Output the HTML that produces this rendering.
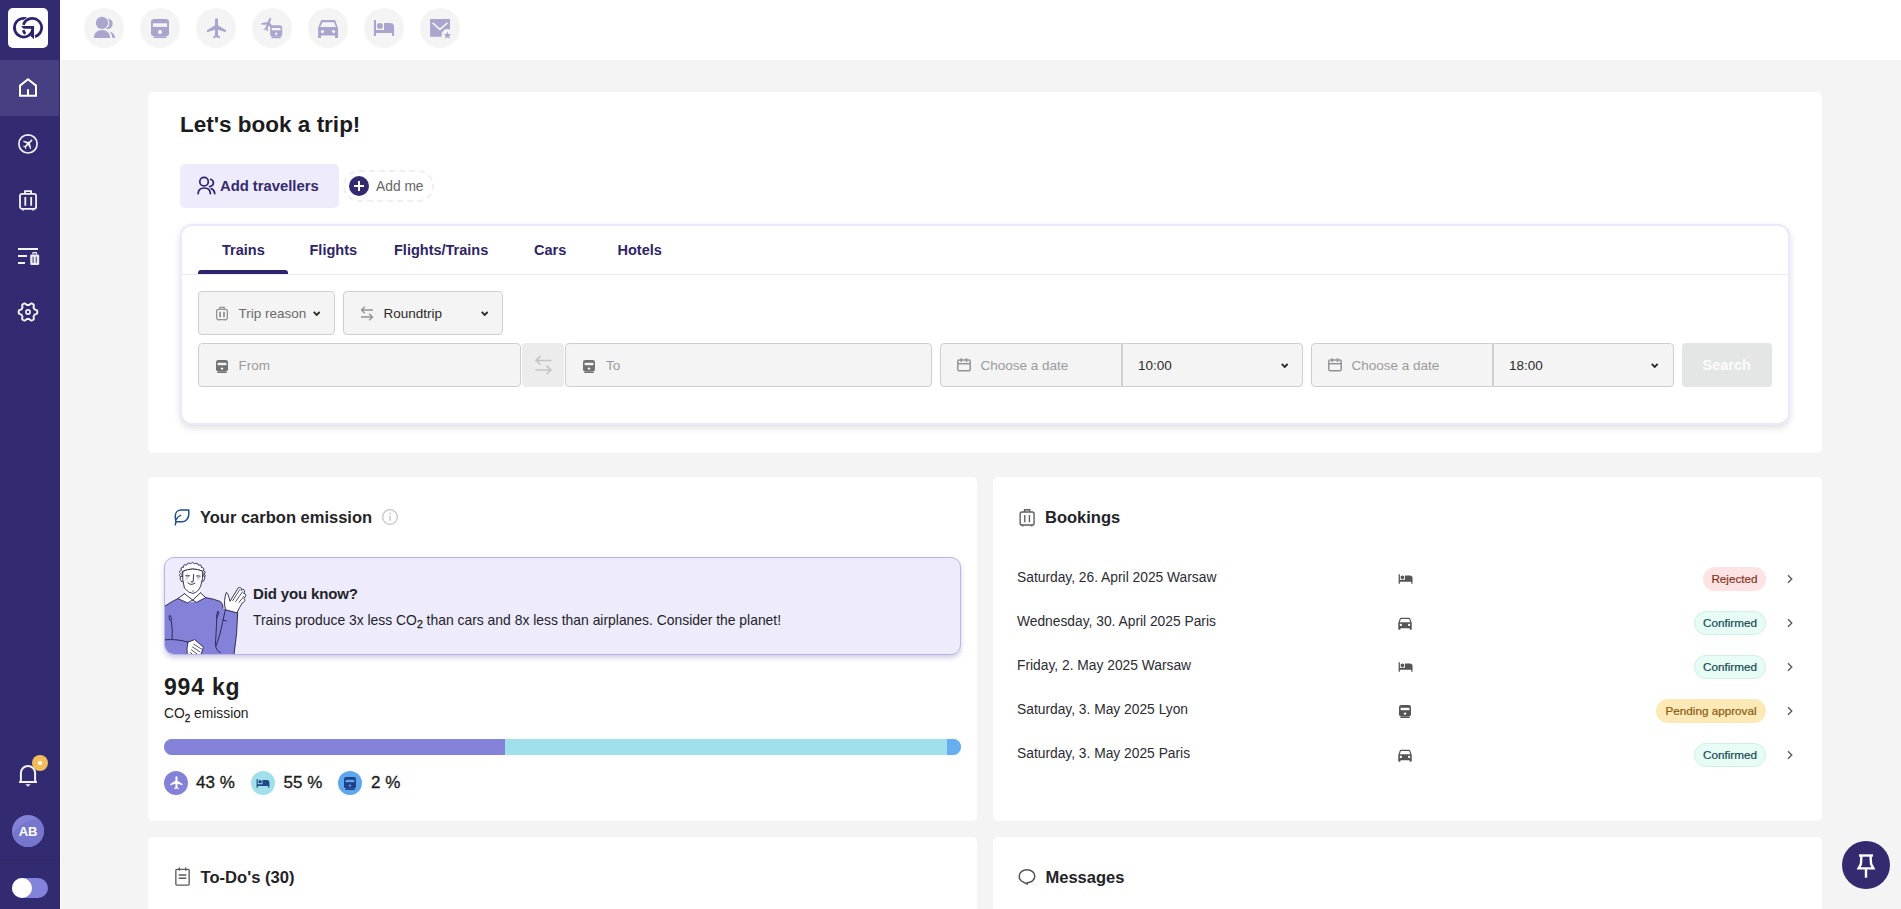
<!DOCTYPE html>
<html lang="en">
<head>
<meta charset="utf-8">
<title>Dashboard</title>
<style>
*{box-sizing:border-box;margin:0;padding:0}
html,body{width:1901px;height:909px;overflow:hidden;background:#f4f4f4;font-family:"Liberation Sans",sans-serif;color:#1d1d1f}
.abs{position:absolute}
#side{position:absolute;left:0;top:0;width:60px;height:909px;background:#332b72;border-right:1px solid #2d2670}
#side .active{position:absolute;left:0;top:60px;width:59px;height:56px;background:#464082}
#logo{position:absolute;left:8px;top:8px;width:40px;height:40px;background:#fff;border-radius:5px}
#top{position:absolute;left:60px;top:0;width:1841px;height:60px;background:#fff}
.qc{position:absolute;top:8px;width:40px;height:40px;border-radius:50%;background:#f4f4f4}
.card{position:absolute;background:#fff;border-radius:5px}
.sico{position:absolute;left:16px;width:24px;height:24px}
.t{position:absolute;white-space:nowrap;line-height:1}
.fld{position:absolute;height:44px;background:#f4f4f4;border:1px solid #cfcfcf;border-radius:4px}
.ph{color:#9b9b9b}
.badge{position:absolute;height:24px;border-radius:12px;font-size:11.7px;-webkit-text-stroke:.2px;line-height:24px;text-align:center;white-space:nowrap}
.ok{background:#e7fcf4;color:#144854;border:1px solid #cff0e4;line-height:22px}
.rej{background:#fde3e4;color:#873222}
.pen{background:#fde9b6;color:#8a5a12}
.brow{position:absolute;left:1017px;font-size:13.8px;color:#2b2b33;white-space:nowrap;line-height:1}
.tab{top:242.700px;font-size:14.500px;font-weight:700;color:#2d2566}
.f13{font-size:13.500px}
.g6{color:#6b6b6b}
.dk{color:#2a2a2a}
.pct{top:774px;font-size:17px;color:#1d1d20;-webkit-text-stroke:.35px #1d1d20}
</style>
</head>
<body>
<!-- SIDEBAR -->
<div id="side">
  <div id="logo"></div>
  <svg class="abs" style="left:8px;top:8px" width="40" height="40" viewBox="8 8 40 40" fill="none" stroke="#2d2470" stroke-width="2.73">
    <path d="M28.41 19.59 A9.33 9.33 0 1 0 32.80 29.93"/>
    <path d="M23.00 26.86 A9.33 9.33 0 0 1 30.99 18.43" stroke="#fff" stroke-width="4.300"/>
    <path d="M23.39 24.86 A9.33 9.33 0 1 1 35.02 36.59"/>
    <path d="M25.25 33.79 A9.33 9.33 0 0 1 23.28 30.08"/>
    <path d="M21.11 26.04 H34.05 V38.80 L33.70 38.89 L30.97 36.38 L31.23 28.68 H23.49 Z" fill="#2d2470" stroke="none"/>
  </svg>
  <div class="active"></div>
  <!-- home -->
  <svg class="abs" style="left:16px;top:76px" width="24" height="24" viewBox="0 0 24 24" fill="none" stroke="#fff" stroke-width="2" stroke-linejoin="miter"><path d="M4 9.600 L12 3.200 L20 9.600 V19.800 H4 Z"/><path d="M12 13.200 V19.800"/></svg>
  <!-- plane circle -->
  <svg class="abs" style="left:16px;top:132px" width="24" height="24" viewBox="0 0 24 24"><circle cx="12" cy="11.900" r="9.1" fill="none" stroke="#f1f0f6" stroke-width="1.7"/><g transform="translate(12.200 11.800) rotate(45) scale(.56) translate(-11.500 -12)"><path fill="#f1f0f6" d="M21 16v-2l-8-5V3.500c0-.830-.670-1.500-1.500-1.500S10 2.670 10 3.500V9l-8 5v2l8-2.500V19l-2 1.500V22l3.500-1 3.500 1v-1.500L13 19v-5.500l8 2.500z"/></g></svg>
  <!-- luggage -->
  <svg class="abs" style="left:16px;top:188px" width="24" height="24" viewBox="0 0 24 24" fill="none" stroke="#f4f3f8" stroke-width="1.8"><rect x="4" y="5.800" width="16.100" height="15" rx="2"/><path d="M9 5.800 V3.100 H15.100 V5.800"/><path d="M9.300 9 V17.800 M15.200 9 V17.800"/><path d="M7 21.500 V22.600 M17.100 21.500 V22.600" stroke-width="2"/></svg>
  <!-- list luggage -->
  <svg class="abs" style="left:16px;top:244px" width="26" height="24" viewBox="0 0 26 24"><path d="M2 5 H22 M2 11.900 H11 M2 18.900 H9" stroke="#f4f3f8" stroke-width="2" fill="none"/><rect x="14.200" y="10.400" width="9" height="10.600" rx="1.300" fill="#ebe9f2"/><path d="M17 10.400 V8.600 H20.400 V10.400" stroke="#ebe9f2" stroke-width="1.200" fill="none"/><path d="M17.100 12.800 V18.800 M20.300 12.800 V18.800" stroke="#6b6390" stroke-width="1.300"/></svg>
  <!-- gear -->
  <svg class="abs" style="left:16px;top:300px" width="24" height="24" viewBox="0 0 24 24" fill="none" stroke="#f4f3f8" stroke-width="1.900" stroke-linejoin="round"><path d="M21.30 12.00 L21.29 12.41 L21.26 12.81 L21.22 13.21 L20.93 13.57 L20.42 13.87 L19.87 14.11 L19.32 14.31 L18.79 14.47 L18.47 14.68 L18.34 14.96 L18.21 15.23 L18.06 15.50 L17.90 15.76 L17.73 16.02 L17.55 16.26 L17.54 16.65 L17.66 17.18 L17.76 17.76 L17.83 18.36 L17.83 18.95 L17.66 19.38 L17.33 19.62 L17.00 19.84 L16.65 20.05 L16.29 20.25 L15.93 20.43 L15.56 20.59 L15.10 20.52 L14.59 20.23 L14.11 19.87 L13.66 19.49 L13.26 19.12 L12.91 18.94 L12.61 18.97 L12.31 18.99 L12.00 19.00 L11.69 18.99 L11.39 18.97 L11.09 18.94 L10.74 19.12 L10.34 19.49 L9.89 19.87 L9.41 20.23 L8.90 20.52 L8.44 20.59 L8.07 20.43 L7.71 20.25 L7.35 20.05 L7.00 19.84 L6.67 19.62 L6.34 19.38 L6.17 18.95 L6.17 18.36 L6.24 17.76 L6.34 17.18 L6.46 16.65 L6.45 16.26 L6.27 16.02 L6.10 15.76 L5.94 15.50 L5.79 15.23 L5.66 14.96 L5.53 14.68 L5.21 14.47 L4.68 14.31 L4.13 14.11 L3.58 13.87 L3.07 13.57 L2.78 13.21 L2.74 12.81 L2.71 12.41 L2.70 12.00 L2.71 11.59 L2.74 11.19 L2.78 10.79 L3.07 10.43 L3.58 10.13 L4.13 9.89 L4.68 9.69 L5.21 9.53 L5.53 9.32 L5.66 9.04 L5.79 8.77 L5.94 8.50 L6.10 8.24 L6.27 7.98 L6.45 7.74 L6.46 7.35 L6.34 6.82 L6.24 6.24 L6.17 5.64 L6.17 5.05 L6.34 4.62 L6.67 4.38 L7.00 4.16 L7.35 3.95 L7.71 3.75 L8.07 3.57 L8.44 3.41 L8.90 3.48 L9.41 3.77 L9.89 4.13 L10.34 4.51 L10.74 4.88 L11.09 5.06 L11.39 5.03 L11.69 5.01 L12.00 5.00 L12.31 5.01 L12.61 5.03 L12.91 5.06 L13.26 4.88 L13.66 4.51 L14.11 4.13 L14.59 3.77 L15.10 3.48 L15.56 3.41 L15.93 3.57 L16.29 3.75 L16.65 3.95 L17.00 4.16 L17.33 4.38 L17.66 4.62 L17.83 5.05 L17.83 5.64 L17.76 6.24 L17.66 6.82 L17.54 7.35 L17.55 7.74 L17.73 7.98 L17.90 8.24 L18.06 8.50 L18.21 8.77 L18.34 9.04 L18.47 9.32 L18.79 9.53 L19.32 9.69 L19.87 9.89 L20.42 10.13 L20.93 10.43 L21.22 10.79 L21.26 11.19 L21.29 11.59Z"/><circle cx="12" cy="12" r="2.100" stroke-width="1.600"/></svg>
  <!-- bell -->
  <svg class="abs" style="left:16px;top:762px" width="24" height="28" viewBox="0 0 24 28" fill="none" stroke="#f4f3f8" stroke-width="2"><path d="M4.900 20 V11 A7.100 7.100 0 0 1 19.100 11 V20"/><path d="M3 20 H21"/><path d="M9.200 22.200 H14.800 L12 24.800Z" fill="#f4f3f8" stroke="none"/></svg>
  <div class="abs" style="left:32px;top:755px;width:16px;height:16px;border-radius:50%;background:#f4bd5c"></div>
  <div class="abs" style="left:38px;top:761px;width:4px;height:4px;border-radius:50%;background:#fff"></div>
  <!-- avatar -->
  <div class="abs" style="left:12px;top:815px;width:32px;height:32px;border-radius:50%;background:#8382d8;overflow:hidden"><div class="abs" style="left:-3.500px;top:3.500px;width:59px;height:59px;border-radius:50%;background:#7676cc"></div></div>
  <div class="t" id="ab" style="left:12px;top:825px;width:32px;text-align:center;font-size:13px;font-weight:700;color:#fff;letter-spacing:-.1px">AB</div>
  <div class="abs" style="left:0;top:859px;width:59px;height:1px;background:#2c2866"></div>
  <!-- toggle -->
  <div class="abs" style="left:12px;top:878px;width:36px;height:20px;border-radius:10px;background:#8483db"></div>
  <div class="abs" style="left:12px;top:878px;width:20px;height:20px;border-radius:50%;background:#fff"></div>
</div>
<div class="abs" style="left:60px;top:0;width:1px;height:909px;background:#fff;z-index:5"></div>
<!-- TOPBAR -->
<div id="top">
</div>
<div class="qc" style="left:84px"></div><div class="qc" style="left:140px"></div><div class="qc" style="left:196px"></div><div class="qc" style="left:252px"></div><div class="qc" style="left:308px"></div><div class="qc" style="left:364px"></div><div class="qc" style="left:420px"></div>
<svg class="abs" style="left:60px;top:0" width="440" height="60" viewBox="60 0 440 60" fill="#a9a5cc">
  <!-- people -->
  <circle cx="107.300" cy="23.800" r="5.400"/>
  <circle cx="102" cy="22.900" r="7.300" fill="#f4f4f4"/>
  <circle cx="102" cy="22.900" r="6.100"/>
  <path d="M109.500 31.500 C113 32.400 115 35 115.200 38 H112.300 C112.300 35.500 111.300 33.200 109.500 31.500 Z"/>
  <path d="M93.900 38 C93.900 33 97.200 30 102 30 S110.100 33 110.100 38Z"/>
  <!-- train -->
  <rect x="151" y="19" width="18" height="17.300" rx="3"/>
  <rect x="152.900" y="23.300" width="14.200" height="3.600" fill="#f4f4f4"/>
  <circle cx="160" cy="32.100" r="2.100" fill="#f4f4f4"/>
  <path d="M154.500 36.200 H165.500 L167 38 H153Z"/>
  <!-- plane -->
  <g transform="translate(205 16.200)"><path d="M21 16v-2l-8-5V3.500c0-.830-.670-1.500-1.500-1.500S10 2.670 10 3.500V9l-8 5v2l8-2.500V19l-2 1.500V22l3.500-1 3.500 1v-1.500L13 19v-5.500l8 2.500z"/></g>
  <!-- plane+train -->
  <g transform="translate(268.100 24.200) rotate(21) scale(.67) translate(-11.500 -12)"><path stroke="#a9a5cc" stroke-width=".25" d="M21 16v-2l-8-5V3.500c0-.830-.670-1.500-1.500-1.500S10 2.670 10 3.500V9l-8 5v2l8-2.500V19l-2 1.500V22l3.500-1 3.500 1v-1.500L13 19v-5.500l8 2.500z"/></g>
  <rect x="270.200" y="25.200" width="12" height="11.600" rx="2.400"/>
  <rect x="271.800" y="28" width="8.800" height="2.300" fill="#f4f4f4"/>
  <circle cx="276.200" cy="33.800" r="1.200" fill="#f4f4f4"/>
  <path d="M272 36.800 H280.400 L281.200 38.300 H271.200Z"/>
  <!-- car -->
  <path d="M321.100 20.100 H335.100 L338 28 V37.900 H335.100 V35.600 H321 V37.900 H318.100 V28 Z"/>
  <path d="M322.300 22.300 H334 L336 27.100 H320.200Z" fill="#f4f4f4"/>
  <circle cx="322.500" cy="31.500" r="1.600" fill="#f4f4f4"/><circle cx="333.500" cy="31.500" r="1.600" fill="#f4f4f4"/>
  <!-- bed -->
  <rect x="373.900" y="20.100" width="2.100" height="15.800"/>
  <circle cx="379.900" cy="26" r="3"/>
  <path d="M384 22.900 H390.200 A3.900 3.900 0 0 1 394.100 26.800 V35.900 H392.100 V33 H374 V29.900 H384Z"/>
  <!-- mail star -->
  <rect x="430.100" y="19" width="19.900" height="17.800"/>
  <path d="M432.600 22.900 L439.900 29.300 L447.400 22.900" fill="none" stroke="#f4f4f4" stroke-width="1.700"/>
  <circle cx="447.400" cy="35" r="5.900" fill="#f4f4f4"/>
  <path d="M447.40 31.50 L448.43 34.08 L451.20 34.26 L449.06 36.04 L449.75 38.74 L447.40 37.25 L445.05 38.74 L445.74 36.04 L443.60 34.26 L446.37 34.08Z"/>
</svg>

<!-- MAIN CARD -->
<div class="card" id="main" style="left:148px;top:92px;width:1674px;height:361px"></div>
<div class="t" id="h1" style="left:180px;top:114px;font-size:22.500px;font-weight:700;color:#1c1c1e">Let's book a trip!</div>
<div class="abs" style="left:180px;top:164px;width:159px;height:44px;background:#edebfc;border-radius:5px"></div>
<svg class="abs" style="left:196px;top:176px" width="20" height="20" viewBox="0 0 20 20" fill="none" stroke="#2e2270" stroke-width="1.700" stroke-linecap="round"><circle cx="8.060" cy="5.700" r="4.250"/><path d="M2.100 17.600 C2.300 14.200 4.800 12 8.300 12 S14.200 14.200 14.400 17.600"/><path d="M14.600 3.300 C16.400 3.900 17.400 5.300 17.400 6.900 S16 10 13.600 10.600"/><path d="M15.200 12.600 C17.300 13.600 18.600 15.400 18.750 17.600"/></svg>
<div class="t" id="addtrav" style="left:220px;top:179px;font-size:14.800px;font-weight:700;color:#332a70">Add travellers</div>
<div class="abs" style="left:343px;top:170px;width:91px;height:32px;border:2px dashed #efefee;border-radius:16px"></div>
<div class="abs" style="left:349px;top:176px;width:20px;height:20px;border-radius:50%;background:#332a70"></div>
<div class="abs" style="left:354px;top:184.700px;width:10px;height:2.600px;background:#fff"></div>
<div class="abs" style="left:357.700px;top:181px;width:2.600px;height:10px;background:#fff"></div>
<div class="t" id="addme" style="left:376px;top:180.300px;font-size:13.800px;color:#666">Add me</div>

<div class="abs" id="panel" style="left:180px;top:224px;width:1610px;height:201px;border:2px solid #ebe9fd;border-radius:12px;background:#fff;box-shadow:0 3px 7px rgba(0,0,0,.13)"></div>
<div class="abs" style="left:182px;top:274px;width:1606px;height:1px;background:#ebe9fd"></div>
<div class="abs" style="left:198px;top:270px;width:90px;height:4px;background:#2d2470;border-radius:3px 3px 0 0"></div>
<div class="t tab" id="tab1" style="left:222px">Trains</div>
<div class="t tab" id="tab2" style="left:309.500px">Flights</div>
<div class="t tab" id="tab3" style="left:394px">Flights/Trains</div>
<div class="t tab" id="tab4" style="left:534px">Cars</div>
<div class="t tab" id="tab5" style="left:617.500px">Hotels</div>

<div class="fld" style="left:198px;top:291px;width:137px"></div>
<div class="fld" style="left:343px;top:291px;width:160px"></div>
<div class="fld" style="left:198px;top:343px;width:323px"></div>
<div class="abs" style="left:522px;top:343px;width:42px;height:44px;background:#ececec;border-radius:4px"></div>
<div class="fld" style="left:565px;top:343px;width:367px"></div>
<div class="fld" style="left:940px;top:343px;width:182px;border-radius:4px 0 0 4px"></div>
<div class="fld" style="left:1122px;top:343px;width:181px;border-radius:0 4px 4px 0"></div>
<div class="fld" style="left:1311px;top:343px;width:182px;border-radius:4px 0 0 4px"></div>
<div class="fld" style="left:1493px;top:343px;width:181px;border-radius:0 4px 4px 0"></div>
<div class="abs" style="left:1682px;top:343px;width:90px;height:44px;background:#e4e6e6;border-radius:4px"></div>
<div class="t" id="search" style="left:1702.500px;top:358px;font-size:14.500px;font-weight:700;color:#fbfbfb">Search</div>

<svg class="abs" style="left:215px;top:305.5px" width="14" height="16" viewBox="0 0 14 16" fill="none" stroke="#949298" stroke-width="1.3"><rect x="1.65" y="3.3" width="10.7" height="10.3" rx="1.8"/><path d="M4.800 3.300 V1.300 H9.200 V3.300"/><path d="M5.100 5.700 V11.300 M9 5.700 V11.300" stroke-width="1.800"/><path d="M3.600 13.700 V14.600 M10.400 13.700 V14.600" stroke-width="1.500"/></svg>
<svg class="abs" style="left:312.7px;top:311px" width="7.400" height="5.600" viewBox="0 0 8 6" fill="none" stroke="#2a2a2a" stroke-width="2"><path d="M.8 1 L4 4.300 L7.200 1"/></svg>
<svg class="abs" style="left:360px;top:305.5px" width="14" height="15" viewBox="0 0 14 15" fill="none" stroke="#949298" stroke-width="1.35"><path d="M13 4 H1.500 M4.800 .8 L1.500 4 L4.800 7.200"/><path d="M1 11 H12.500 M9.200 7.800 L12.500 11 L9.200 14.200"/></svg>
<svg class="abs" style="left:480.7px;top:311px" width="7.400" height="5.600" viewBox="0 0 8 6" fill="none" stroke="#2a2a2a" stroke-width="2"><path d="M.8 1 L4 4.300 L7.200 1"/></svg>
<svg class="abs" style="left:215px;top:358.500px" width="14" height="15" viewBox="0 0 14 15"><rect x="1" y="1" width="12" height="11.500" rx="2.300" fill="#727272"/><rect x="2.600" y="3.800" width="8.800" height="2.400" fill="#f4f4f4"/><circle cx="7" cy="9.600" r="1.200" fill="#f4f4f4"/><path d="M2.800 12.500 H11.200 L12 14 H2Z" fill="#727272"/></svg>
<svg class="abs" style="left:582px;top:358.500px" width="14" height="15" viewBox="0 0 14 15"><rect x="1" y="1" width="12" height="11.500" rx="2.300" fill="#727272"/><rect x="2.600" y="3.800" width="8.800" height="2.400" fill="#f4f4f4"/><circle cx="7" cy="9.600" r="1.200" fill="#f4f4f4"/><path d="M2.800 12.500 H11.200 L12 14 H2Z" fill="#727272"/></svg>
<svg class="abs" style="left:533.8px;top:355px" width="19" height="20.4" viewBox="0 0 14 15" fill="none" stroke="#c4c4c4" stroke-width="1.15"><path d="M13 4 H1.500 M4.800 .8 L1.500 4 L4.800 7.200"/><path d="M1 11 H12.500 M9.200 7.800 L12.500 11 L9.200 14.200"/></svg>
<svg class="abs" style="left:957px;top:357.5px" width="14" height="14" viewBox="0 0 14 14" fill="none" stroke="#949298" stroke-width="1.500"><rect x=".8" y="2" width="12.400" height="10.800" rx="1.400"/><path d="M.8 5.700 H13.200"/><path d="M4.300 .2 V4 M9.500 .2 V4"/></svg>
<svg class="abs" style="left:1328px;top:357.5px" width="14" height="14" viewBox="0 0 14 14" fill="none" stroke="#949298" stroke-width="1.500"><rect x=".8" y="2" width="12.400" height="10.800" rx="1.400"/><path d="M.8 5.700 H13.200"/><path d="M4.300 .2 V4 M9.500 .2 V4"/></svg>
<svg class="abs" style="left:1280.6px;top:362.5px" width="7.400" height="5.600" viewBox="0 0 8 6" fill="none" stroke="#2a2a2a" stroke-width="2"><path d="M.8 1 L4 4.300 L7.200 1"/></svg>
<svg class="abs" style="left:1651.3px;top:362.5px" width="7.400" height="5.600" viewBox="0 0 8 6" fill="none" stroke="#2a2a2a" stroke-width="2"><path d="M.8 1 L4 4.300 L7.200 1"/></svg>
<div class="t f13 g6" id="tripreason" style="left:238.500px;top:306.500px">Trip reason</div>
<div class="t f13 dk" id="roundtrip" style="left:383.500px;top:306.500px">Roundtrip</div>
<div class="t f13 ph" id="from" style="left:238.500px;top:358.500px">From</div>
<div class="t f13 ph" id="to" style="left:606px;top:358.500px">To</div>
<div class="t f13 ph" id="cd1" style="left:980.500px;top:358.500px">Choose a date</div>
<div class="t f13 dk" id="t1" style="left:1138px;top:358.500px">10:00</div>
<div class="t f13 ph" id="cd2" style="left:1351.500px;top:358.500px">Choose a date</div>
<div class="t f13 dk" id="t2" style="left:1509px;top:358.500px">18:00</div>

<!-- CARBON CARD -->
<div class="card" id="carbon" style="left:148px;top:477px;width:829px;height:344px"></div>
<svg class="abs" style="left:172px;top:507px" width="20" height="20" viewBox="0 0 20 20" fill="none" stroke="#1c4f8e" stroke-width="1.500" stroke-linecap="round" stroke-linejoin="round"><path d="M3.900 14.800 L3.200 9.200 C3.200 5.600 5.600 3.100 9.200 3.100 H16.800 V7.400 C16.600 11.600 13.600 14.800 9.900 14.800 Z"/><path d="M3.900 14.800 L3.300 17.800"/><path d="M4.400 12.300 C5.200 10.300 6.800 9 8.700 8.400"/></svg>
<div class="t" id="yce" style="left:200px;top:509px;font-size:16.500px;font-weight:700;color:#232328">Your carbon emission</div>
<svg class="abs" style="left:381px;top:508px" width="18" height="18" viewBox="0 0 18 18" fill="none" stroke="#c4c4c4" stroke-width="1.300"><circle cx="9" cy="9" r="7.300"/><path d="M9 7.800 V12.800" stroke-width="1.400"/><circle cx="9" cy="5.500" r=".9" fill="#c4c4c4" stroke="none"/></svg>
<div class="abs" id="banner" style="left:164px;top:557px;width:797px;height:98px;background:#edebfc;border:1px solid #b8b4ee;border-radius:10px;box-shadow:0 3px 5px rgba(50,40,120,.22)"></div>
<div class="abs" style="left:165px;top:558px;width:100px;height:96px;border-radius:9px 0 0 9px;overflow:hidden">
<svg class="abs" style="left:0;top:0" width="100" height="96" viewBox="165 558 100 96">
<g transform="translate(160 553) scale(.11547)" fill="none" stroke="#2a2550" stroke-width="8" stroke-linecap="round" stroke-linejoin="round">
  <path d="M30 466 Q90 425 158 393 L235 430 L290 425 L395 386 Q470 398 522 420 Q548 440 546 482 L566 488 L673 516 Q670 700 640 890 L30 890 Z" fill="#8482d8" stroke="none"/>
  <path d="M38 464 Q90 425 158 393 M395 386 Q470 398 522 420 Q548 440 546 476" stroke-width="8.200"/>
  <path d="M673 516 Q670 700 640 885" stroke-width="8.200"/>
  <!-- neck + collar -->
  <path d="M215 290 L212 352 L155 395 L238 432 L283 408 L316 428 L396 386 L350 345 L348 285 Z" fill="#fff" stroke="none"/>
  <path d="M212 352 L155 395 L238 432 L283 408 M350 345 L396 386 L316 428 L283 408 M212 352 L283 408 L350 345" stroke-width="8.200"/>
  <!-- hair -->
  <path d="M184 209 Q154 198 179 179 Q156 159 186 150 Q172 122 204 124 Q201 93 231 105 Q239 74 264 95 Q282 68 299 96 Q325 75 332 106 Q363 95 358 126 Q390 126 375 152 Q405 163 381 182 Q405 202 375 212  L370 158 Q280 118 197 160 Z" fill="#fff" stroke-width="8"/>
  <!-- ears -->
  <path d="M196 205 Q170 195 176 228 Q182 255 204 250" fill="#fff" stroke-width="8.200"/>
  <path d="M368 200 Q392 190 386 225 Q380 250 360 248" fill="#fff" stroke-width="8.200"/>
  <!-- face -->
  <path d="M197 160 Q190 235 212 305 Q250 350 286 350 Q330 340 352 288 Q374 225 370 158 Q280 118 197 160Z" fill="#fff" stroke-width="8"/>
  <ellipse cx="229" cy="226" rx="15" ry="9" fill="#f9cfd8" stroke="none"/>
  <ellipse cx="331" cy="226" rx="15" ry="9" fill="#f9cfd8" stroke="none"/>
  <path d="M222 196 Q238 188 256 196 M316 198 Q332 192 348 200" stroke-width="7"/>
  <path d="M228 206 H250 M322 208 H342" stroke-width="5"/>
  <path d="M291 186 L287 250 Q276 254 268 248" stroke-width="8.200"/>
  <path d="M240 256 Q262 286 302 262" stroke-width="8.200"/>
  <path d="M280 330 Q286 334 292 330" stroke-width="5"/>
  <!-- raised hand -->
  <path d="M566 488 C552 440 560 380 574 342 C590 346 598 390 606 418 L676 304 C694 292 712 304 702 324 L716 314 C734 314 738 334 724 350 L736 352 C750 364 740 382 726 392 L734 400 C740 416 726 428 712 432 C700 458 680 482 668 516 Z" fill="#fff" stroke-width="8.200"/>
  <path d="M630 412 L690 318 M656 420 L714 336 M684 428 L728 374" stroke-width="7"/>
  <!-- arm lines -->
  <path d="M500 508 Q486 530 492 560 Q504 540 510 512 Q506 500 500 508 M492 560 Q486 700 480 790 Q484 850 522 862" stroke-width="8.200"/>
  <path d="M566 490 Q545 590 520 700 Q500 760 488 800 M545 580 L574 588" stroke-width="8.200"/>
  <path d="M84 542 Q70 552 84 580 Q98 596 100 570 Q98 545 84 542 M98 590 Q112 680 104 746" stroke-width="8.200"/>
  <path d="M38 752 Q150 742 242 772" stroke-width="8.200"/>
  <!-- lower hand -->
  <path d="M242 772 L300 750 L376 816 L352 890 L236 890 Q228 820 242 772Z" fill="#fff" stroke-width="8.200"/>
  <path d="M292 790 L360 832 M282 814 L346 856 M272 838 L326 878 M262 862 L290 884" stroke-width="7"/>
</g></svg></div>
<div class="t" id="dyk" style="left:253px;top:586.300px;font-size:15px;letter-spacing:-.15px;font-weight:700;color:#232328">Did you know?</div>
<div class="t" id="tp" style="left:253px;top:613.800px;font-size:13.900px;color:#232328">Trains produce 3x less CO<span style="font-size:10.500px;position:relative;top:3.500px;-webkit-text-stroke:.3px #232328">2</span> than cars and 8x less than airplanes. Consider the planet!</div>
<div class="t" id="kg" style="left:164px;top:675.900px;font-size:23px;letter-spacing:.8px;font-weight:700;color:#1d1d20">994 kg</div>
<div class="t" id="co2" style="left:164px;top:707.300px;font-size:13.800px;color:#1d1d20">CO<span style="font-size:10px;position:relative;top:3.500px;-webkit-text-stroke:.3px #1d1d20">2</span> emission</div>
<div class="abs" style="left:164px;top:739px;width:797px;height:16px;border-radius:8px;overflow:hidden;background:#9fe0ea"><div class="abs" style="left:0;top:0;width:341px;height:16px;background:#8482d8"></div><div class="abs" style="left:783px;top:0;width:14px;height:16px;background:#66aef0"></div></div>
<div class="abs" style="left:164px;top:771px;width:24px;height:24px;border-radius:50%;background:#8482d8"></div>
<svg class="abs" style="left:168.700px;top:775.300px" width="15.500" height="15.500" viewBox="0 0 24 24"><path fill="#fff" d="M21 16v-2l-8-5V3.500c0-.830-.670-1.500-1.500-1.500S10 2.670 10 3.500V9l-8 5v2l8-2.500V19l-2 1.500V22l3.500-1 3.500 1v-1.500L13 19v-5.500l8 2.500z"/></svg>
<div class="t pct" id="p1" style="left:196px">43 %</div>
<div class="abs" style="left:251px;top:771px;width:24px;height:24px;border-radius:50%;background:#9fe0ea"></div>
<svg class="abs" style="left:256px;top:776px" width="14" height="14" viewBox="0 0 24 24"><path fill="#1f4a86" d="M7 13c1.660 0 3-1.340 3-3S8.660 7 7 7s-3 1.340-3 3 1.340 3 3 3zm12-6h-8v7H3V5H1v15h2v-3h18v3h2v-9c0-2.210-1.790-4-4-4z"/></svg>
<div class="t pct" id="p2" style="left:283.500px">55 %</div>
<div class="abs" style="left:338px;top:771px;width:24px;height:24px;border-radius:50%;background:#5ea6ee"></div>
<svg class="abs" style="left:343px;top:775.500px" width="14" height="15" viewBox="0 0 14 15"><rect x="1" y="1" width="12" height="11.500" rx="2.300" fill="#1f3f86"/><rect x="2.600" y="3.800" width="8.800" height="2.400" fill="#5ea6ee"/><circle cx="7" cy="9.600" r="1.200" fill="#5ea6ee"/><path d="M2.800 12.500 H11.200 L12 14 H2Z" fill="#1f3f86"/></svg>
<div class="t pct" id="p3" style="left:371px">2 %</div>
<!-- BOOKINGS CARD -->
<div class="card" id="book" style="left:993px;top:477px;width:829px;height:344px"></div>
<svg class="abs" style="left:1017.600px;top:507.800px" width="18.600" height="20.500" viewBox="0 0 20 22" fill="none" stroke="#606060" stroke-width="1.500"><rect x="2.300" y="4.300" width="15" height="14" rx="2"/><path d="M7 4.300 V1.800 H12.600 V4.300"/><path d="M7.300 7.500 V15.200 M12.300 7.500 V15.200"/><path d="M5 18.500 V19.800 M14.600 18.500 V19.800" stroke-width="1.800"/></svg>
<div class="t" id="bk" style="left:1045px;top:509.300px;font-size:16.500px;font-weight:700;color:#232328">Bookings</div>
<div class="brow" style="top:571.3px">Saturday, 26. April 2025 Warsaw</div>
<svg class="abs" style="left:1397.600px;top:571px" width="15.200" height="15.200" viewBox="0 0 24 24"><path fill="#555" d="M7 13c1.660 0 3-1.340 3-3S8.660 7 7 7s-3 1.340-3 3 1.340 3 3 3zm12-6h-8v7H3V5H1v15h2v-3h18v3h2v-9c0-2.210-1.790-4-4-4z"/></svg>
<div class="badge rej" style="left:1703px;top:567px;width:63px">Rejected</div>
<svg class="abs" style="left:1784px;top:573px" width="12" height="12" viewBox="0 0 12 12" fill="none" stroke="#555" stroke-width="1.300"><path d="M4 2.200 L7.800 6 L4 9.800"/></svg>
<div class="brow" style="top:615.3px">Wednesday, 30. April 2025 Paris</div>
<svg class="abs" style="left:1396px;top:614px" width="18" height="18" viewBox="0 0 24 24"><path fill="#555" d="M18.920 6.010C18.720 5.420 18.160 5 17.500 5h-11c-.660 0-1.210.420-1.420 1.010L3 12v8c0 .550.450 1 1 1h1c.550 0 1-.450 1-1v-1h12v1c0 .550.450 1 1 1h1c.550 0 1-.450 1-1v-8l-2.080-5.990zM6.500 16c-.830 0-1.500-.670-1.500-1.500S5.670 13 6.500 13s1.500.670 1.500 1.500S7.330 16 6.500 16zm11 0c-.830 0-1.500-.670-1.500-1.500s.670-1.500 1.500-1.500 1.500.670 1.500 1.500-.670 1.500-1.500 1.500zM5 11l1.500-4.500h11L19 11H5z"/></svg>
<div class="badge ok" style="left:1694px;top:611px;width:72px">Confirmed</div>
<svg class="abs" style="left:1784px;top:617px" width="12" height="12" viewBox="0 0 12 12" fill="none" stroke="#555" stroke-width="1.300"><path d="M4 2.200 L7.800 6 L4 9.800"/></svg>
<div class="brow" style="top:659.3px">Friday, 2. May 2025 Warsaw</div>
<svg class="abs" style="left:1397.600px;top:659px" width="15.200" height="15.200" viewBox="0 0 24 24"><path fill="#555" d="M7 13c1.660 0 3-1.340 3-3S8.660 7 7 7s-3 1.340-3 3 1.340 3 3 3zm12-6h-8v7H3V5H1v15h2v-3h18v3h2v-9c0-2.210-1.790-4-4-4z"/></svg>
<div class="badge ok" style="left:1694px;top:655px;width:72px">Confirmed</div>
<svg class="abs" style="left:1784px;top:661px" width="12" height="12" viewBox="0 0 12 12" fill="none" stroke="#555" stroke-width="1.300"><path d="M4 2.200 L7.800 6 L4 9.800"/></svg>
<div class="brow" style="top:703.3px">Saturday, 3. May 2025 Lyon</div>
<svg class="abs" style="left:1398px;top:704px" width="14" height="15" viewBox="0 0 14 15"><rect x="1" y="1" width="12" height="11.500" rx="2.300" fill="#555"/><rect x="2.600" y="3.800" width="8.800" height="2.400" fill="#fff"/><circle cx="7" cy="9.600" r="1.200" fill="#fff"/><path d="M2.800 12.500 H11.200 L12 14 H2Z" fill="#555"/></svg>
<div class="badge pen" style="left:1656px;top:699px;width:110px">Pending approval</div>
<svg class="abs" style="left:1784px;top:705px" width="12" height="12" viewBox="0 0 12 12" fill="none" stroke="#555" stroke-width="1.300"><path d="M4 2.200 L7.800 6 L4 9.800"/></svg>
<div class="brow" style="top:747.3px">Saturday, 3. May 2025 Paris</div>
<svg class="abs" style="left:1396px;top:746px" width="18" height="18" viewBox="0 0 24 24"><path fill="#555" d="M18.920 6.010C18.720 5.420 18.160 5 17.500 5h-11c-.660 0-1.210.420-1.420 1.010L3 12v8c0 .550.450 1 1 1h1c.550 0 1-.450 1-1v-1h12v1c0 .550.450 1 1 1h1c.550 0 1-.450 1-1v-8l-2.080-5.990zM6.500 16c-.830 0-1.500-.670-1.500-1.500S5.670 13 6.500 13s1.500.670 1.500 1.500S7.330 16 6.500 16zm11 0c-.830 0-1.500-.670-1.500-1.500s.670-1.500 1.500-1.500 1.500.670 1.500 1.500-.670 1.500-1.500 1.500zM5 11l1.500-4.500h11L19 11H5z"/></svg>
<div class="badge ok" style="left:1694px;top:743px;width:72px">Confirmed</div>
<svg class="abs" style="left:1784px;top:749px" width="12" height="12" viewBox="0 0 12 12" fill="none" stroke="#555" stroke-width="1.300"><path d="M4 2.200 L7.800 6 L4 9.800"/></svg>
<!-- TODO CARD -->
<div class="card" id="todo" style="left:148px;top:837px;width:829px;height:100px"></div>
<svg class="abs" style="left:172.600px;top:865.600px" width="19" height="21" viewBox="0 0 20 22" fill="none" stroke="#5a5a5a" stroke-width="1.400"><rect x="3" y="3.500" width="14" height="16.500" rx="1"/><path d="M6.600 1.500 V5 M13.400 1.500 V5"/><path d="M6 9.300 H14 M6 12.800 H14" stroke-width="1.600"/></svg>
<div class="t" id="td" style="left:200.500px;top:870px;font-size:16.600px;font-weight:700;color:#232328">To-Do's (30)</div>
<!-- MESSAGES CARD -->
<div class="card" id="msg" style="left:993px;top:837px;width:829px;height:100px"></div>
<svg class="abs" style="left:1016px;top:866px" width="22" height="22" viewBox="0 0 22 22" fill="none" stroke="#555" stroke-width="1.500" stroke-linejoin="round"><path d="M11 3.800 C6.600 3.800 3.200 6.500 3.200 10.300 C3.200 13 5 15.300 7.800 16.300 L11.300 18.200 L11 16.800 C15.400 16.800 18.800 14 18.800 10.300 C18.800 6.500 15.400 3.800 11 3.800Z"/></svg>
<div class="t" id="ms" style="left:1045.500px;top:868.800px;font-size:16.500px;font-weight:700;color:#232328">Messages</div>
<div class="abs" style="left:1842px;top:841px;width:48px;height:48px;border-radius:50%;background:#332a70"></div>
<svg class="abs" style="left:1854px;top:852px" width="24" height="28" viewBox="0 0 24 28" fill="none" stroke="#fff" stroke-width="2.400" stroke-linejoin="miter"><path d="M5 3.500 H19"/><path d="M7.500 3.500 L6.900 12.200 L4.600 16.400 H19.400 L17.100 12.200 L16.500 3.500"/><path d="M12 16.400 V25.700"/></svg>

</body>
</html>
